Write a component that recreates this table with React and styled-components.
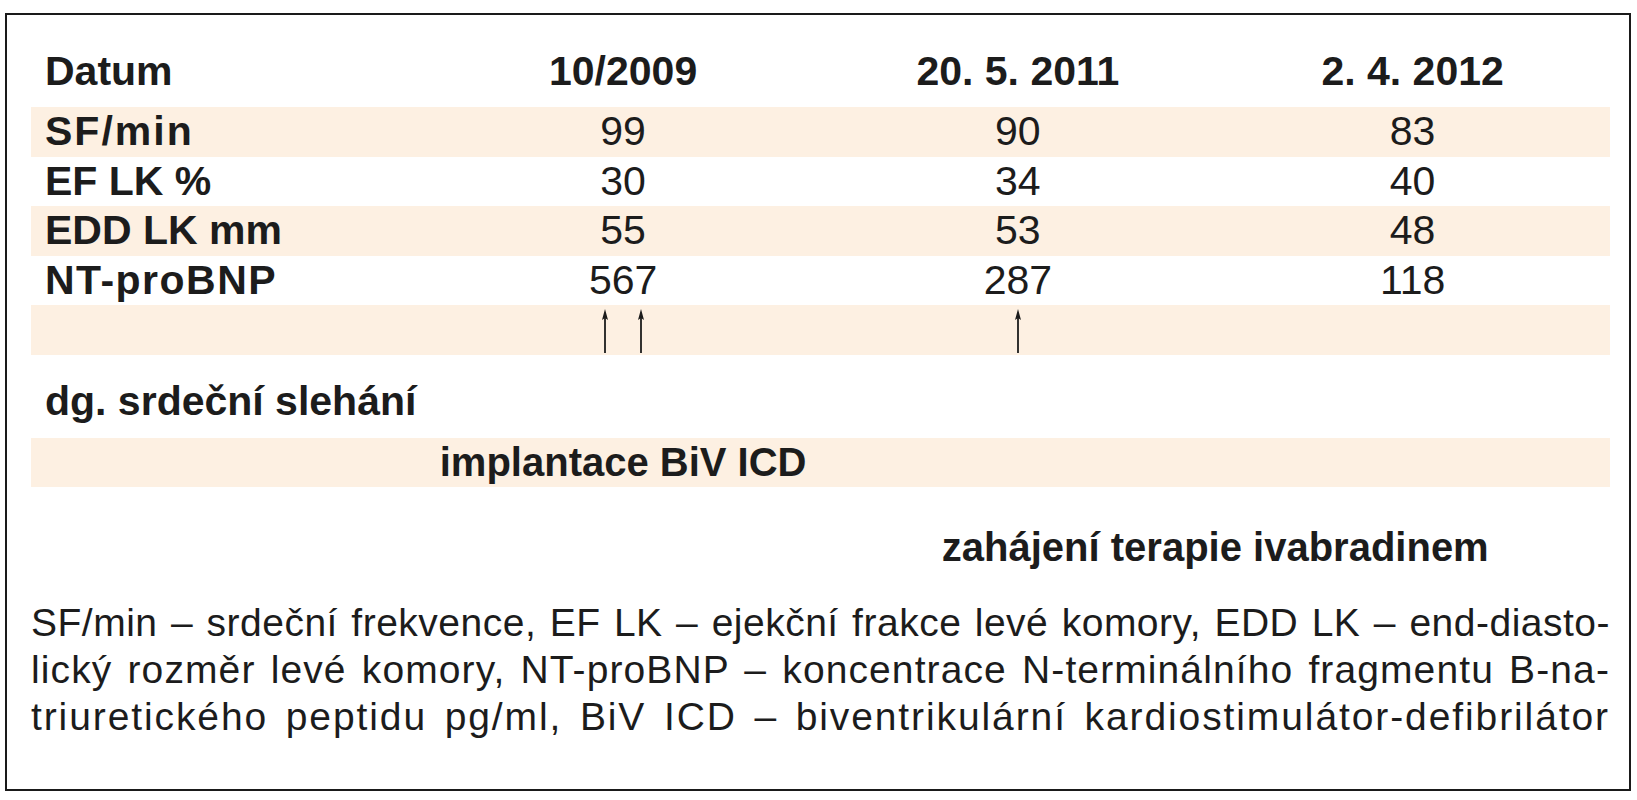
import React from "react";
import styled, { createGlobalStyle } from "styled-components";

const Colors = {
  Ink: "#1c1c1c",
  Band: "#fdf0e2",
  Frame: "#1a1a1a",
  White: "#ffffff",
};

const GlobalStyle = createGlobalStyle`
  html, body {
    margin: 0;
    padding: 0;
    background: ${Colors.White};
  }
  body {
    font-family: "Liberation Sans", Arial, sans-serif;
    color: ${Colors.Ink};
  }
`;

const Frame = styled.section`
  box-sizing: border-box;
  margin: 13px 6px 0 5px;
  height: 778px;
  border: 2px solid ${Colors.Frame};
  padding: 32px 19px 0 24px;
  display: flex;
  flex-direction: column;
`;

const Table = styled.div`
  display: flex;
  flex-direction: column;
`;

const Row = styled.div`
  display: grid;
  grid-template-columns: repeat(4, 1fr);
  align-items: center;
  height: ${(p) => p.$height || 49.5}px;
  margin-top: ${(p) => p.$gap || 0}px;
  background: ${(p) => (p.$shaded ? Colors.Band : "transparent")};
`;

const HeadRow = styled(Row)`
  align-items: start;
  line-height: 48px;
`;

const Label = styled.div`
  padding-left: 14px;
  font-size: 41px;
  font-weight: 700;
  letter-spacing: ${(p) => p.$tracking || 0}px;
  white-space: nowrap;
`;

const HeadValue = styled.div`
  text-align: center;
  font-size: 41px;
  font-weight: 700;
`;

const Value = styled.div`
  text-align: center;
  font-size: 41px;
`;

const Event = styled.div`
  grid-column: ${(p) => p.$span};
  text-align: center;
  font-size: 40px;
  font-weight: 700;
  white-space: nowrap;
`;

const ArrowCell = styled.div`
  grid-column: ${(p) => p.$col};
  display: flex;
  justify-content: center;
  gap: 26px;
  padding-top: 2px;
`;

const Note = styled.div`
  margin-top: 27px;
  font-size: 39px;
  line-height: 47px;
`;

const NoteLine = styled.div`
  text-align: justify;
  text-align-last: justify;
  letter-spacing: ${(p) => p.$tracking}px;
`;

const UpArrow = () => (
  <svg width="10" height="44" viewBox="0 0 10 44">
    <line x1="5" y1="8" x2="5" y2="44" stroke={Colors.Ink} strokeWidth="1.8" />
    <polygon points="5,0 2,11 5,9 8,11" fill={Colors.Ink} />
  </svg>
);

const dates = ["10/2009", "20. 5. 2011", "2. 4. 2012"];

const measurements = [
  { label: "SF/min", tracking: 2, values: ["99", "90", "83"] },
  { label: "EF LK %", tracking: 0, values: ["30", "34", "40"] },
  { label: "EDD LK mm", tracking: 0, values: ["55", "53", "48"] },
  { label: "NT-proBNP", tracking: 1.5, values: ["567", "287", "118"] },
];

// tracking per line so each line fills the width like the printed legend
const noteLines = [
  { text: "SF/min – srdeční frekvence, EF LK – ejekční frakce levé komory, EDD LK – end-diasto-", tracking: 0.5 },
  { text: "lický rozměr levé komory, NT-proBNP – koncentrace N-terminálního fragmentu B-na-", tracking: 1.1 },
  { text: "triuretického peptidu pg/ml, BiV ICD – biventrikulární kardiostimulátor-defibrilátor", tracking: 1.9 },
];

const App = () => {
  return (
    <>
      <GlobalStyle />
      <Frame>
        <Table>
          <HeadRow $height={60}>
            <Label>Datum</Label>
            {dates.map((d) => (
              <HeadValue key={d}>{d}</HeadValue>
            ))}
          </HeadRow>
          {measurements.map((m, i) => (
            <Row key={m.label} $shaded={i % 2 === 0}>
              <Label $tracking={m.tracking}>{m.label}</Label>
              {m.values.map((v, j) => (
                <Value key={j}>{v}</Value>
              ))}
            </Row>
          ))}
          <Row $shaded>
            <ArrowCell $col={2}>
              <UpArrow />
              <UpArrow />
            </ArrowCell>
            <ArrowCell $col={3}>
              <UpArrow />
            </ArrowCell>
          </Row>
          <Row $gap={22.5}>
            <Label>dg. srdeční slehání</Label>
          </Row>
          <Row $shaded $gap={11.5} $height={49}>
            <Event $span="2">implantace BiV ICD</Event>
          </Row>
          <Row $gap={36} $height={49}>
            <Event $span="3 / 5">zahájení terapie ivabradinem</Event>
          </Row>
        </Table>
        <Note>
          {noteLines.map((line) => (
            <NoteLine key={line.text} $tracking={line.tracking}>
              {line.text}
            </NoteLine>
          ))}
        </Note>
      </Frame>
    </>
  );
};

export default App;
